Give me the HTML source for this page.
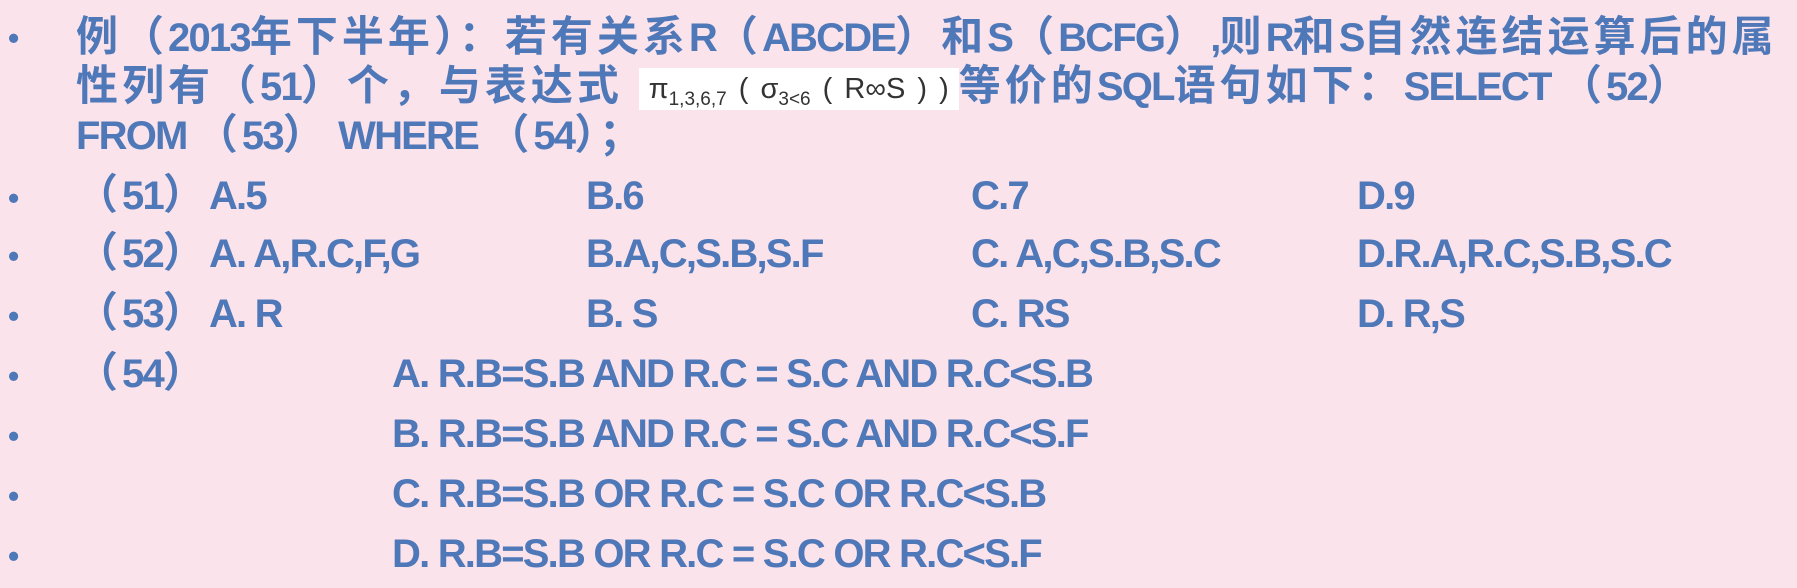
<!DOCTYPE html>
<html><head><meta charset="utf-8"><style>
html,body{margin:0;padding:0}
body{width:1797px;height:588px;background:#fbe3ec;position:relative;overflow:hidden;
font-family:"Liberation Sans","Noto Sans CJK SC",sans-serif;font-weight:bold;color:#4f78b9;font-size:42px;letter-spacing:4px}
.l{position:absolute;white-space:nowrap;line-height:46px}
i{font-style:normal;font-size:40px;letter-spacing:-1.8px}
.b{position:absolute;left:8px;font-size:32px;line-height:44px;color:#4f78b9;letter-spacing:0}
.f{display:inline-block;background:#fff;color:#333;font-weight:normal;font-size:29px;padding:2px 10px;vertical-align:middle;height:38px;line-height:38px;font-family:"Liberation Sans",sans-serif;word-spacing:4px;letter-spacing:0}
.f sub{font-size:19px}
</style></head><body>
<div class="b" style="top:16px">•</div>
<div class="l" style="left:76px;top:14px">例（<i>2013</i>年下半年）：若有关系<i>R</i>（<i>ABCDE</i>）和<i>S</i>（<i>BCFG</i>）<i>,</i>则<i>R</i>和<i>S</i>自然连结运算后的属</div>
<div class="l" style="left:76px;top:63px">性列有（<i>51</i>）个，与表达式 <span class="f">π<sub>1,3,6,7</sub> ( σ<sub>3&lt;6</sub> ( R∞S ) )</span>等价的<i>SQL</i>语句如下：<i>SELECT </i>（<i>52</i>）</div>
<div class="l" style="left:76px;top:112px"><i>FROM </i>（<i>53</i>）<i> WHERE </i>（<i>54</i>）；</div>

<div class="b" style="top:176px">•</div>
<div class="l" style="left:76px;top:172px">（<i>51</i>）<i>A.5</i></div>
<div class="l" style="left:586px;top:172px"><i>B.6</i></div>
<div class="l" style="left:971px;top:172px"><i>C.7</i></div>
<div class="l" style="left:1357px;top:172px"><i>D.9</i></div>

<div class="b" style="top:234px">•</div>
<div class="l" style="left:76px;top:230px">（<i>52</i>）<i>A. A,R.C,F,G</i></div>
<div class="l" style="left:586px;top:230px"><i>B.A,C,S.B,S.F</i></div>
<div class="l" style="left:971px;top:230px"><i>C. A,C,S.B,S.C</i></div>
<div class="l" style="left:1357px;top:230px"><i>D.R.A,R.C,S.B,S.C</i></div>

<div class="b" style="top:294px">•</div>
<div class="l" style="left:76px;top:290px">（<i>53</i>）<i>A. R</i></div>
<div class="l" style="left:586px;top:290px"><i>B. S</i></div>
<div class="l" style="left:971px;top:290px"><i>C. RS</i></div>
<div class="l" style="left:1357px;top:290px"><i>D. R,S</i></div>

<div class="b" style="top:354px">•</div>
<div class="l" style="left:76px;top:350px">（<i>54</i>）</div>
<div class="l" style="left:392px;top:350px"><i>A. R.B=S.B AND R.C = S.C AND R.C&lt;S.B</i></div>
<div class="b" style="top:414px">•</div>
<div class="l" style="left:392px;top:410px"><i>B. R.B=S.B AND R.C = S.C AND R.C&lt;S.F</i></div>
<div class="b" style="top:474px">•</div>
<div class="l" style="left:392px;top:470px"><i>C. R.B=S.B OR R.C = S.C OR R.C&lt;S.B</i></div>
<div class="b" style="top:534px">•</div>
<div class="l" style="left:392px;top:530px"><i>D. R.B=S.B OR R.C = S.C OR R.C&lt;S.F</i></div>
</body></html>
